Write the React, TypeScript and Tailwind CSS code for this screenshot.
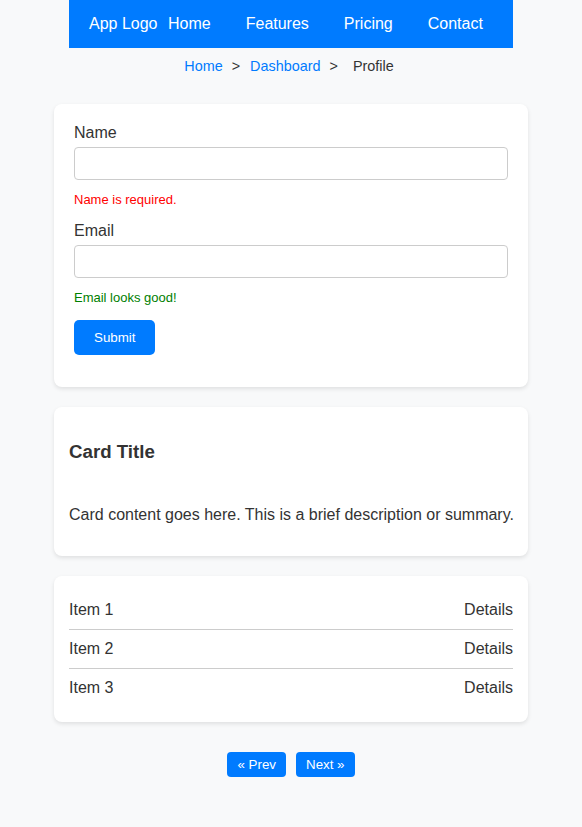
import React from "react";

export default function App() {
  const font = { fontFamily: '"Liberation Sans", Arial, sans-serif' };
  return (
    <div className="min-h-[827px] bg-[#f8f9fa] text-[#333]" style={font}>
      <nav className="mx-auto flex h-[48px] w-[444px] items-center bg-[#007bff] px-[20px] text-[16px] text-white">
        <span>App Logo</span>
        <ul className="ml-[10.5px] flex gap-[35px]">
          <li>Home</li>
          <li>Features</li>
          <li>Pricing</li>
          <li>Contact</li>
        </ul>
      </nav>

      <div className="flex justify-center py-[10px] text-[14.4px] leading-[16px]">
        <span className="text-[#007bff]">Home</span>
        <span className="ml-[9px] mr-[10px]">&gt;</span>
        <span className="text-[#007bff]">Dashboard</span>
        <span className="ml-[9px] mr-[15px]">&gt;</span>
        <span className="mr-[4px]">Profile</span>
      </div>

      <div className="mx-auto mt-[20px] w-[474px]">
        <div className="rounded-[8px] bg-white px-[20px] pt-[20px] pb-[32px] shadow-[0_2px_4px_rgba(0,0,0,0.1)]">
          <div className="mb-[15px]">
            <label className="block text-[16px] leading-[18px]">Name</label>
            <div className="mt-[5px] h-[33px] rounded-[4px] border border-[#ccc] bg-white" />
            <div className="mt-[12px] text-[13px] leading-[15px] text-[#ff0000]">Name is required.</div>
          </div>
          <div className="mb-[15px]">
            <label className="block text-[16px] leading-[18px]">Email</label>
            <div className="mt-[5px] h-[33px] rounded-[4px] border border-[#ccc] bg-white" />
            <div className="mt-[12px] text-[13px] leading-[15px] text-[#008000]">Email looks good!</div>
          </div>
          <button className="h-[35px] rounded-[5px] bg-[#007bff] px-[20px] text-[13.33px] leading-[15px] text-white">
            Submit
          </button>
        </div>

        <div className="mt-[20px] rounded-[8px] bg-white px-[15px] pt-[15px] pb-[15px] shadow-[0_2px_4px_rgba(0,0,0,0.1)]">
          <h3 className="mt-[18.7px] text-[18.7px] font-bold leading-[21.5px]">Card Title</h3>
          <p className="mt-[44px] mb-[16px] whitespace-nowrap text-[16px] leading-[18.4px]">
            Card content goes here. This is a brief description or summary.
          </p>
        </div>

        <div className="mt-[20px] rounded-[8px] bg-white p-[15px] shadow-[0_2px_4px_rgba(0,0,0,0.1)]">
          {["Item 1", "Item 2", "Item 3"].map((item, i) => (
            <div
              key={item}
              className={
                i < 2
                  ? "flex justify-between border-b border-[#ccc] py-[10px] text-[16px] leading-[18px]"
                  : "flex justify-between py-[10px] text-[16px] leading-[18px]"
              }
            >
              <span>{item}</span>
              <span>Details</span>
            </div>
          ))}
        </div>

        <div className="mt-[30px] flex justify-center gap-[10px]">
          <button className="h-[25px] rounded-[4px] bg-[#007bff] px-[10px] text-[13.33px] leading-[15px] text-white">
            « Prev
          </button>
          <button className="h-[25px] rounded-[4px] bg-[#007bff] px-[10px] text-[13.33px] leading-[15px] text-white">
            Next »
          </button>
        </div>
      </div>
    </div>
  );
}
